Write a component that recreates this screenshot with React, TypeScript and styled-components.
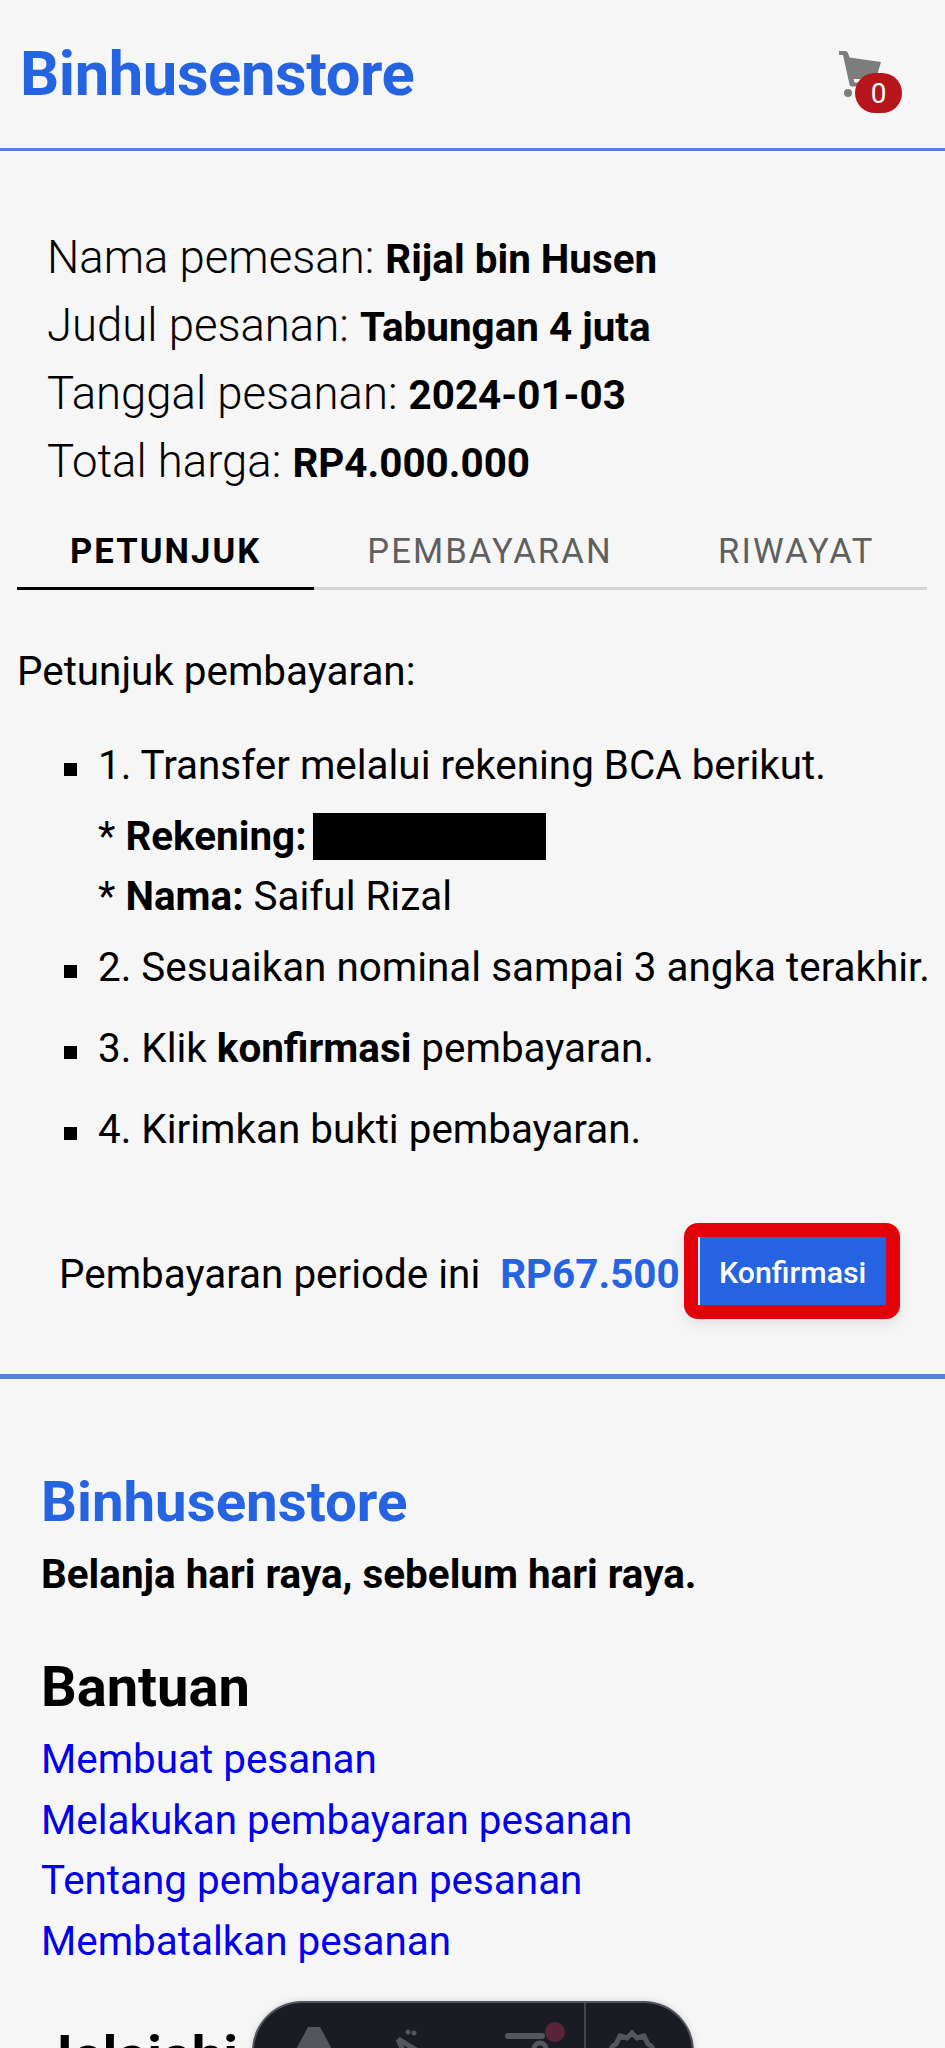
import styled, { createGlobalStyle } from "styled-components";

const GlobalStyle = createGlobalStyle`
  html, body {
    margin: 0;
    padding: 0;
    background: #f6f6f6;
    font-family: Roboto, "Liberation Sans", sans-serif;
    color: #000;
  }
`;

const Page = styled.div`
  position: relative;
  height: 2048px;
  overflow: hidden;
  background: #f6f6f6;
`;

const Header = styled.header`
  display: flex;
  justify-content: space-between;
  align-items: center;
  height: 148px;
  padding: 0 63px 0 20px;
  border-bottom: 3px solid #4f82e3;
`;

const Brand = styled.a`
  font-size: 61.5px;
  font-weight: 700;
  color: #2563e0;
  letter-spacing: -0.4px;
`;

const CartWrap = styled.div`
  position: relative;
  width: 44px;
  height: 46px;
  margin-top: 0;
  svg {
    display: block;
  }
`;

const CartBadge = styled.span`
  position: absolute;
  left: 17px;
  top: 22px;
  width: 47px;
  height: 40px;
  border-radius: 20px;
  background: #b5151b;
  color: #fff;
  font-size: 28px;
  line-height: 41px;
  text-align: center;
`;

const Info = styled.section`
  padding: 73px 0 0 47px;
`;

const InfoRow = styled.div`
  font-size: 45.5px;
  font-weight: 300;
  line-height: 68px;
  white-space: nowrap;
  b {
    font-size: 40.4px;
    font-weight: 700;
    line-height: 1;
  }
`;

const Tabs = styled.div`
  display: flex;
  margin: 15px 18px 0 17px;
  height: 76px;
  border-bottom: 3px solid #d4d4d4;
`;

const Tab = styled.div<{ $active?: boolean; $w: number }>`
  width: ${(p) => p.$w}px;
  height: 76px;
  line-height: 81px;
  text-align: center;
  font-size: 34.6px;
  letter-spacing: 2.1px;
  font-weight: ${(p) => (p.$active ? 700 : 400)};
  color: ${(p) => (p.$active ? "#000" : "#5f5f5f")};
  border-bottom: ${(p) => (p.$active ? "3px solid #000" : "none")};
`;

const Guide = styled.section`
  padding: 54px 0 0 17px;
  font-size: 40.4px;
`;

const GuideTitle = styled.p`
  margin: 0;
  line-height: 56px;
`;

const Steps = styled.ul`
  margin: 38px 0 0;
  padding: 0 0 0 81px;
  list-style: none;
`;

const Step = styled.li<{ $tight?: boolean }>`
  line-height: 56px;
  margin-bottom: ${(p) => (p.$tight ? 13 : 25)}px;
  white-space: nowrap;
  &::before {
    content: "";
    display: inline-block;
    width: 13px;
    height: 13px;
    margin: 0 21px 0 -34px;
    background: #000;
    vertical-align: 3px;
  }
`;

const SubLine = styled.div`
  line-height: 60px;
  &:first-of-type {
    margin-top: 13px;
  }
`;

const Redacted = styled.span`
  display: inline-block;
  width: 233px;
  height: 47px;
  margin-left: -4px;
  background: #000;
  vertical-align: -10px;
`;

const PayRow = styled.div`
  display: flex;
  align-items: center;
  padding: 43px 0 0 59px;
  font-size: 40.4px;
`;

const PayLabel = styled.span`
  margin-right: 20px;
`;

const PayAmount = styled.span`
  font-weight: 700;
  color: #2563e0;
  margin-right: 4px;
`;

const ConfirmButton = styled.button`
  width: 216px;
  height: 96px;
  box-sizing: border-box;
  margin: -3px 0 3px;
  border: 14px solid #e30009;
  border-radius: 14px;
  padding: 3px 0 0 2px;
  background: #2563e0;
  background-clip: padding-box;
  color: #fff;
  font-family: inherit;
  font-size: 30.3px;
  font-weight: 500;
  box-shadow: inset 2px 0 0 #e6e6f2, 0 6px 14px rgba(0, 0, 0, 0.08);
`;

const Footer = styled.footer`
  margin-top: 52px;
  border-top: 5px solid #4f82e3;
  padding: 91px 0 0 41px;
`;

const FooterBrand = styled.div`
  font-size: 56.4px;
  font-weight: 700;
  color: #2563e0;
  line-height: 64px;
`;

const Tagline = styled.div`
  font-size: 40.4px;
  font-weight: 700;
  line-height: 56px;
  margin-top: 13px;
`;

const SectionTitle = styled.h2`
  margin: 46px 0 5px;
  font-size: 56px;
  font-weight: 700;
  line-height: 76px;
`;

const FooterLink = styled.a`
  display: block;
  font-size: 40.4px;
  line-height: 60.5px;
  color: #0000ee;
`;

const ToolBar = styled.div`
  position: absolute;
  left: 252px;
  top: 2001px;
  width: 442px;
  height: 100px;
  box-sizing: border-box;
  display: flex;
  border-radius: 50px 50px 0 0;
  background: #1a1c23;
  border: 2px solid #53555e;
  border-bottom: none;
  box-shadow: 0 0 6px rgba(0, 0, 0, 0.15);
  overflow: hidden;
`;

const ToolMain = styled.div`
  width: 332px;
  border-right: 2px solid #43454d;
  svg {
    display: block;
  }
`;

const ToolSide = styled.div`
  flex: 1;
  svg {
    display: block;
  }
`;

const App = () => {
  return (
    <Page>
      <GlobalStyle />
      <Header>
        <Brand>Binhusenstore</Brand>
        <CartWrap>
          <svg width="44" height="46" viewBox="0 0 44 46" fill="#7d7d7d">
            <path d="M1 0h6c1.5 0 2.500.8 3 2l1.600 4.500L43 11l-5 17H15.500l1 3.500H36v4H14c-1 0-2-.6-2.400-1.700L5 4H1z" />
            <circle cx="10" cy="42" r="4" />
          </svg>
          <CartBadge>0</CartBadge>
        </CartWrap>
      </Header>

      <Info>
        <InfoRow>
          Nama pemesan: <b>Rijal bin Husen</b>
        </InfoRow>
        <InfoRow>
          Judul pesanan: <b>Tabungan 4 juta</b>
        </InfoRow>
        <InfoRow>
          Tanggal pesanan: <b>2024-01-03</b>
        </InfoRow>
        <InfoRow>
          Total harga: <b>RP4.000.000</b>
        </InfoRow>
      </Info>

      <Tabs>
        <Tab $active $w={298}>PETUNJUK</Tab>
        <Tab $w={352}>PEMBAYARAN</Tab>
        <Tab $w={262}>RIWAYAT</Tab>
      </Tabs>

      <Guide>
        <GuideTitle>Petunjuk pembayaran:</GuideTitle>
        <Steps>
          <Step $tight>
            1. Transfer melalui rekening BCA berikut.
            <SubLine>
              * <b>Rekening:</b> <Redacted />
            </SubLine>
            <SubLine>
              * <b>Nama:</b> Saiful Rizal
            </SubLine>
          </Step>
          <Step>2. Sesuaikan nominal sampai 3 angka terakhir.</Step>
          <Step>
            3. Klik <b>konfirmasi</b> pembayaran.
          </Step>
          <Step>4. Kirimkan bukti pembayaran.</Step>
        </Steps>
      </Guide>

      <PayRow>
        <PayLabel>Pembayaran periode ini</PayLabel>
        <PayAmount>RP67.500</PayAmount>
        <ConfirmButton>Konfirmasi</ConfirmButton>
      </PayRow>

      <Footer>
        <FooterBrand>Binhusenstore</FooterBrand>
        <Tagline>Belanja hari raya, sebelum hari raya.</Tagline>
        <SectionTitle>Bantuan</SectionTitle>
        <FooterLink>Membuat pesanan</FooterLink>
        <FooterLink>Melakukan pembayaran pesanan</FooterLink>
        <FooterLink>Tentang pembayaran pesanan</FooterLink>
        <FooterLink>Membatalkan pesanan</FooterLink>
        <SectionTitle>Jelajahi</SectionTitle>
      </Footer>

      <ToolBar>
        <ToolMain>
          <svg width="330" height="100" viewBox="0 0 330 100" fill="none">
            <path d="M40 50 54 24h12l14 26z" fill="#55565c" />
            <path d="M144 36l40 24M144 36l10 24" stroke="#55565c" strokeWidth="5" />
            <circle cx="154" cy="29" r="2.500" fill="#55565c" />
            <circle cx="160" cy="30" r="2.500" fill="#55565c" />
            <rect x="251" y="30" width="40" height="6" rx="3" fill="#55565c" />
            <circle cx="301" cy="29" r="10" fill="#5a2338" />
            <path d="M280 46a6 6 0 0 1 12 0" stroke="#55565c" strokeWidth="5" />
          </svg>
        </ToolMain>
        <ToolSide>
          <svg width="106" height="100" viewBox="0 0 106 100" fill="none">
            <path d="M24 50c1-6 3-8 6-9l4-8 7 2 5-5 5 5 7-2 4 8c3 1 5 3 6 9" stroke="#55565c" strokeWidth="5" />
          </svg>
        </ToolSide>
      </ToolBar>
    </Page>
  );
};

export default App;
